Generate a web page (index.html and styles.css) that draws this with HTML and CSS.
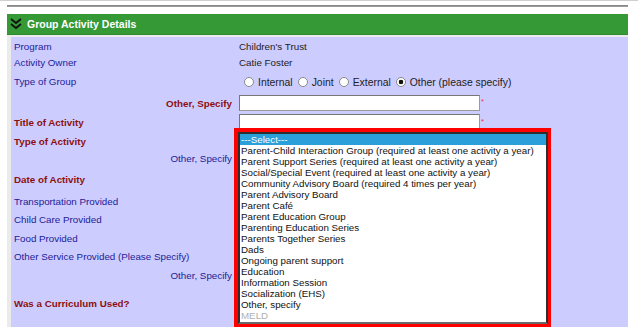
FILE: index.html
```html
<!DOCTYPE html>
<html lang="en">
<head>
    <meta charset="UTF-8">
    <title>Group Activity Details</title>
    <link rel="stylesheet" href="styles.css">
</head>
<body>
    <div class="topline"></div>
    <div class="panel">
        <div class="rule"></div>
        <div class="panel-head">
            <svg class="chevron" width="12" height="12" viewBox="0 0 12 12">
                <polyline points="1,1 6,5 11,1" fill="none" stroke="#111" stroke-width="1.8"/>
                <polyline points="1,6 6,10 11,6" fill="none" stroke="#111" stroke-width="1.8"/>
            </svg>
            <span>Group Activity Details</span>
        </div>
        <div class="panel-body">
            <div class="form">
                <div class="lbl">Program</div>
                <div class="val">Children's Trust</div>

                <div class="lbl">Activity Owner</div>
                <div class="val">Catie Foster</div>

                <div class="lbl">Type of Group</div>
                <div class="val radios">
                    <label><input type="radio" name="grp">Internal</label>
                    <label><input type="radio" name="grp">Joint</label>
                    <label><input type="radio" name="grp">External</label>
                    <label><input type="radio" name="grp" checked>Other (please specify)</label>
                </div>

                <div class="lbl req right">Other, Specify</div>
                <div class="val"><input type="text" class="field"><span class="star">*</span></div>

                <div class="lbl req">Title of Activity</div>
                <div class="val"><input type="text" class="field"><span class="star">*</span></div>

                <div class="lbl req">Type of Activity</div>
                <div class="val">
                    <!-- lista abierta del select, resaltada en rojo -->
                    <div class="highlight">
                        <div class="listbox">
                            <div class="opt selected">---Select---</div>
                            <div class="opt">Parent-Child Interaction Group (required at least one activity a year)</div>
                            <div class="opt">Parent Support Series (required at least one activity a year)</div>
                            <div class="opt">Social/Special Event (required at least one activity a year)</div>
                            <div class="opt">Community Advisory Board (required 4 times per year)</div>
                            <div class="opt">Parent Advisory Board</div>
                            <div class="opt">Parent Café</div>
                            <div class="opt">Parent Education Group</div>
                            <div class="opt">Parenting Education Series</div>
                            <div class="opt">Parents Together Series</div>
                            <div class="opt">Dads</div>
                            <div class="opt">Ongoing parent support</div>
                            <div class="opt">Education</div>
                            <div class="opt">Information Session</div>
                            <div class="opt">Socialization (EHS)</div>
                            <div class="opt">Other, specify</div>
                            <div class="opt disabled">MELD</div>
                        </div>
                    </div>
                </div>

                <div class="lbl right">Other, Specify</div>
                <div class="val"></div>

                <div class="lbl req">Date of Activity</div>
                <div class="val"></div>

                <div class="lbl">Transportation Provided</div>
                <div class="val"></div>

                <div class="lbl">Child Care Provided</div>
                <div class="val"></div>

                <div class="lbl">Food Provided</div>
                <div class="val"></div>

                <div class="lbl">Other Service Provided (Please Specify)</div>
                <div class="val"></div>

                <div class="lbl right">Other, Specify</div>
                <div class="val"></div>

                <div class="lbl req">Was a Curriculum Used?</div>
                <div class="val"></div>
            </div>
        </div>
    </div>
</body>
</html>
```

FILE: styles.css
```css
/* Estilos de la página */
body {
    margin: 0;
    font-family: "Liberation Sans", Arial, sans-serif;
    background: #fff;
}
.topline {
    height: 1px;
    background: #cfcfcf;
    margin-bottom: 4px;
}
.panel {
    margin-left: 7px;
    width: 621px;
}
.rule {
    height: 2px;
    background: linear-gradient(#7d7d7d, #a5a5a5);
    margin-bottom: 7px;
}
.panel-head {
    height: 20px;
    background: #359936;
    border-bottom: 1px solid #2c8a2f;
    display: flex;
    align-items: center;
    gap: 5px;
    padding-left: 3px;
    color: #fff;
    font-weight: bold;
    font-size: 10.5px;
}
.chevron {
    display: block;
}
.panel-body {
    background: #ebebeb;
    padding: 2px 0 0 4px;
}
.form {
    background: #ccccff;
    display: grid;
    grid-template-columns: 221px 1fr;
    grid-template-rows: 18px 14px 24px 20px 18px 20px 14px 28px 16px 20px 18px 18px 20px 36px;
    column-gap: 7px;
    padding-bottom: 6px;
    font-size: 9.8px;
}
.lbl {
    display: flex;
    align-items: center;
    padding-left: 3px;
    color: #1c1c96;
}
.lbl.right {
    justify-content: flex-end;
}
.lbl.req {
    color: #8c0f0f;
    font-weight: bold;
}
.val {
    display: flex;
    align-items: center;
    color: #222;
    position: relative;
}
.radios {
    padding-left: 5px;
    font-size: 10.4px;
}
.radios label {
    display: flex;
    align-items: center;
    gap: 4px;
    margin-right: 5px;
    color: #222;
    margin-top: 2px;
}
.radios input {
    appearance: none;
    width: 10px;
    height: 10px;
    margin: 0;
    border: 1px solid #8a8a8a;
    border-radius: 50%;
    background: #fff;
}
.radios input:checked {
    background: radial-gradient(circle, #111 0 2px, #fff 2.6px);
}
.field {
    width: 241px;
    height: 16px;
    box-sizing: border-box;
    margin: 0;
    border: 1px solid #9a9a9a;
    border-top-color: #777;
    border-left-color: #777;
    background: #fff;
}
.star {
    color: #f03a3a;
    font-size: 8px;
    align-self: flex-start;
    margin: 4px 0 0 1px;
}
.highlight {
    position: absolute;
    top: -3px;
    left: -5px;
    border: 4px solid #f00;
    border-right-width: 3px;
}
.listbox {
    width: 306px;
    height: 188px;
    border: 2px solid #2e2e2e;
    border-bottom-color: #6a6a6a;
    background: #fff;
    overflow: hidden;
    font-size: 9.75px;
}
.opt {
    height: 11px;
    line-height: 11px;
    padding-left: 1px;
    color: #111;
    white-space: nowrap;
}
.opt.selected {
    background: #2a9fda;
    color: #fff;
}
.opt.disabled {
    color: #b0b0b0;
}
```
